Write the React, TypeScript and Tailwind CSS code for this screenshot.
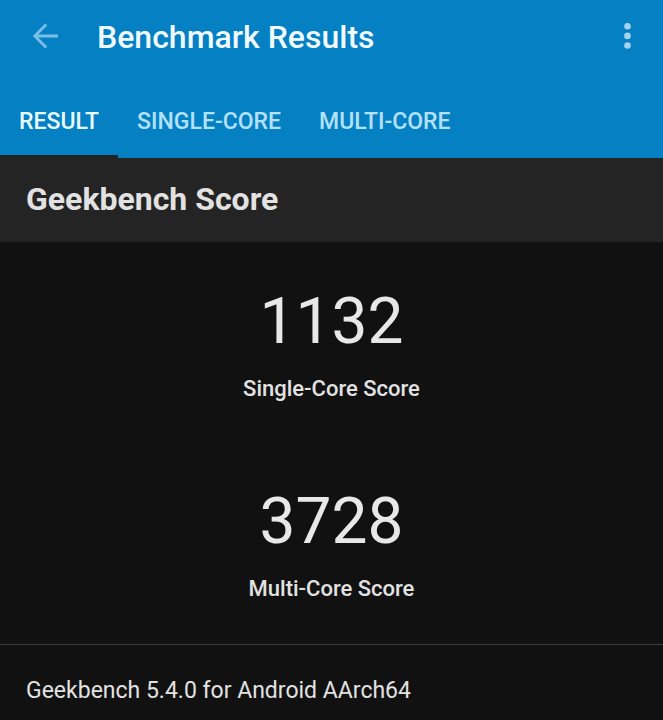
import React from "react";

const tabs = ["RESULT", "SINGLE-CORE", "MULTI-CORE"];

function Score({ value, label }: { value: string; label: string }) {
  return (
    <div className="flex h-[200px] flex-col items-center pt-10">
      <div className="text-[64px] leading-20 text-[#e8e8e8]">{value}</div>
      <div className="mt-3 text-[22px] leading-[30px] font-medium text-[#e2e2e2]">{label}</div>
    </div>
  );
}

export default function App() {
  return (
    <div className="min-h-screen bg-[#111111] font-[Roboto,sans-serif] text-[#e2e2e2]">
      <header className="bg-[#0480c3]">
        <div className="flex h-[74px] items-center pr-5 pl-8">
          <button aria-label="Back" className="text-[#7cbfe6]">
            <svg className="block size-7" viewBox="0 0 28 28" fill="none" stroke="currentColor" strokeWidth="2.8">
              <path d="M26 13H3M14.2 1.6 2.8 13 14.2 24.4" />
            </svg>
          </button>
          <h1 className="ml-[37px] flex-1 text-[32px] leading-10 font-medium text-[#f0faff]">Benchmark Results</h1>
          <button aria-label="More options" className="text-[#a3d3f0]">
            <svg className="block h-7 w-8" viewBox="0 0 32 28" fill="currentColor">
              <circle cx="16.5" cy="3.2" r="3.3" />
              <circle cx="16.5" cy="12.9" r="3.3" />
              <circle cx="16.5" cy="22.5" r="3.3" />
            </svg>
          </button>
        </div>
        <nav role="tablist" className="flex h-[84px] text-[23px] font-medium">
          {tabs.map((tab, i) => (
            <button
              key={tab}
              role="tab"
              aria-selected={i === 0}
              className={
                i === 0
                  ? "border-b-3 border-[#202124] px-[19px] pt-4 text-[#eaf9ff]"
                  : "border-b-3 border-transparent px-[19px] pt-4 text-[#b4e1fa]"
              }
            >
              {tab}
            </button>
          ))}
        </nav>
      </header>
      <main>
        <h2 className="bg-[#242424] px-[26px] pt-[19px] pb-[21px] text-[32px] leading-11 font-bold">Geekbench Score</h2>
        <Score value="1132" label="Single-Core Score" />
        <Score value="3728" label="Multi-Core Score" />
        <p className="mt-[2px] border-t border-[#3d3d3d] px-[26px] pt-8 text-[23px] leading-7">
          Geekbench 5.4.0 for Android AArch64
        </p>
      </main>
    </div>
  );
}
